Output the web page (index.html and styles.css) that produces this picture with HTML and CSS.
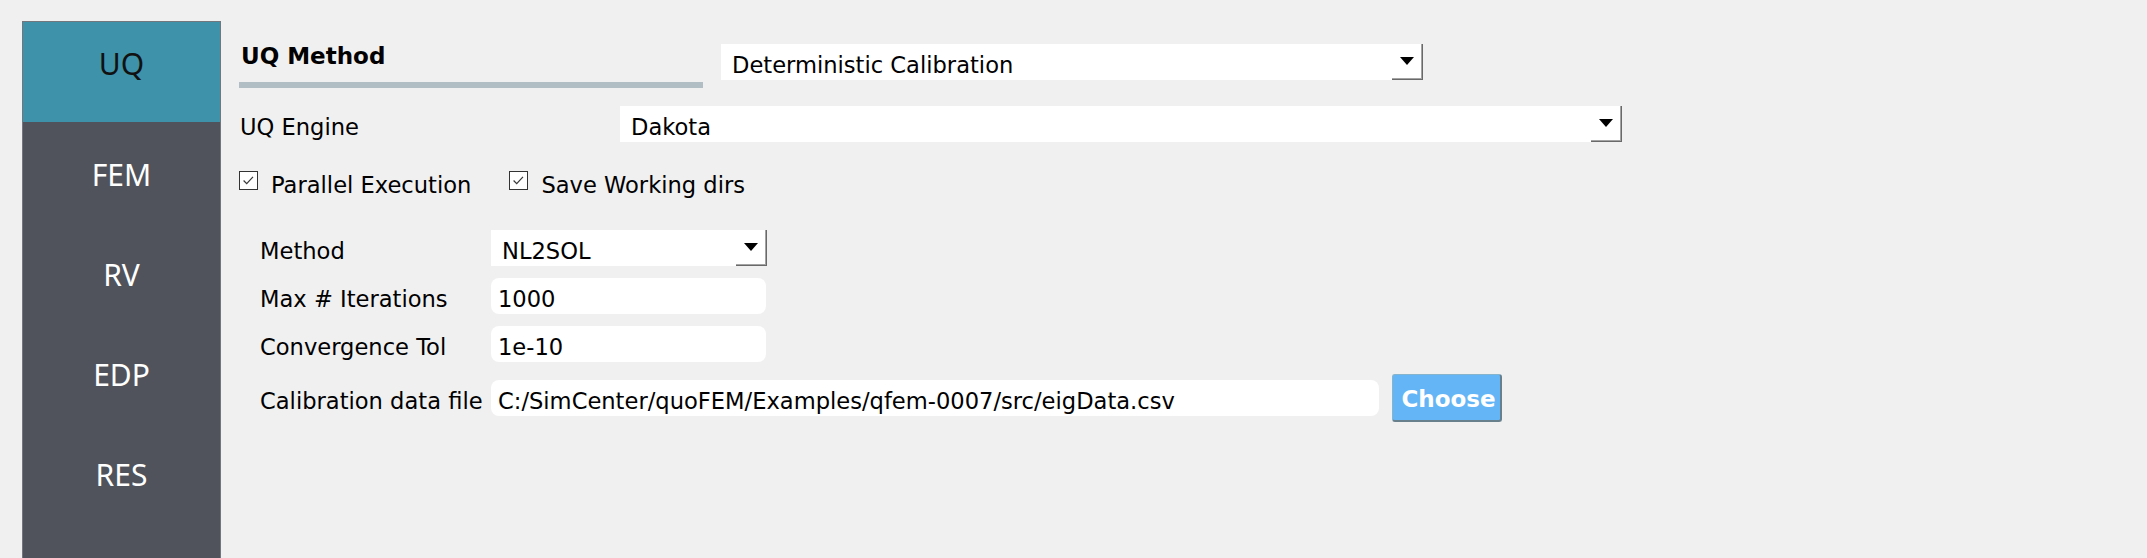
FILE: index.html
```html
<!DOCTYPE html>
<html>
<head>
<meta charset="utf-8">
<link rel="stylesheet" href="styles.css">
</head>
<body>
<nav class="sidebar">
  <div class="nav-item active">UQ</div>
  <div class="nav-item">FEM</div>
  <div class="nav-item">RV</div>
  <div class="nav-item">EDP</div>
  <div class="nav-item">RES</div>
</nav>
<main class="main">
  <div class="row-head">
    <div class="title-block">
      <div class="title">UQ Method</div>
      <div class="title-bar"></div>
    </div>
    <div class="combo combo-method-type">
      <span class="combo-text">Deterministic Calibration</span>
      <span class="combo-btn"><span class="arrow"></span></span>
    </div>
  </div>
  <div class="row-engine">
    <div class="label engine-label">UQ Engine</div>
    <div class="combo combo-engine">
      <span class="combo-text">Dakota</span>
      <span class="combo-btn"><span class="arrow"></span></span>
    </div>
  </div>
  <div class="row-checks">
    <div class="check">
      <span class="box"><svg viewBox="0 0 19 19" width="17" height="17"><path d="M4 9.5 L7.5 13 L14.5 5.5" fill="none" stroke="#3a3a3a" stroke-width="1.4"/></svg></span>
      <span class="check-label">Parallel Execution</span>
    </div>
    <div class="check">
      <span class="box"><svg viewBox="0 0 19 19" width="17" height="17"><path d="M4 9.5 L7.5 13 L14.5 5.5" fill="none" stroke="#3a3a3a" stroke-width="1.4"/></svg></span>
      <span class="check-label">Save Working dirs</span>
    </div>
  </div>
  <div class="form">
    <div class="form-row">
      <div class="label form-label">Method</div>
      <div class="combo combo-small">
        <span class="combo-text">NL2SOL</span>
        <span class="combo-btn"><span class="arrow"></span></span>
      </div>
    </div>
    <div class="form-row">
      <div class="label form-label">Max # Iterations</div>
      <div class="input input-small">1000</div>
    </div>
    <div class="form-row">
      <div class="label form-label">Convergence Tol</div>
      <div class="input input-small">1e-10</div>
    </div>
    <div class="form-row file-row">
      <div class="label form-label">Calibration data file</div>
      <div class="input input-file">C:/SimCenter/quoFEM/Examples/qfem-0007/src/eigData.csv</div>
      <button class="choose">Choose</button>
    </div>
  </div>
</main>
</body>
</html>
```
FILE: styles.css
```css
html, body {
  margin: 0;
  padding: 0;
}
body {
  background: #f0f0f0;
  height: 100vh;
  overflow: hidden;
  display: flex;
  font-family: "DejaVu Sans", sans-serif;
  font-size: 22.6px;
  color: #000;
}
.sidebar {
  margin: 21px 0 0 22px;
  width: 197px;
  border: 1px solid #72767d;
  border-bottom: none;
  background: #50535b;
  display: flex;
  flex-direction: column;
  flex-shrink: 0;
}
.nav-item {
  height: 100px;
  box-sizing: border-box;
  display: flex;
  align-items: center;
  justify-content: center;
  font-family: "Noto Sans", sans-serif;
  font-size: 30px;
  line-height: 1;
  color: #ffffff;
  padding-top: 6px;
}
.nav-item.active {
  background: #3e92a9;
  color: #111;
  padding-top: 0;
  padding-bottom: 16px;
}
.main {
  padding: 43px 0 0 18px;
  display: flex;
  flex-direction: column;
}
.row-head {
  display: flex;
  align-items: flex-start;
}
.title-block {
  width: 464px;
  display: flex;
  flex-direction: column;
}
.title {
  font-weight: bold;
  font-size: 23px;
  line-height: 26px;
  padding-left: 2px;
}
.title-bar {
  margin-top: 13px;
  height: 6px;
  background: #b1bec4;
}
.combo {
  height: 36px;
  box-sizing: border-box;
  background: #fff;
  display: flex;
  align-items: stretch;
}
.combo-text {
  flex: 1;
  display: flex;
  align-items: center;
  padding: 6px 0 0 11px;
  white-space: nowrap;
}
.combo-btn {
  width: 31px;
  box-sizing: border-box;
  border-right: 1px solid #696969;
  border-bottom: 1px solid #696969;
  box-shadow: inset -1px -1px 0 #a3a3a3;
  display: flex;
  align-items: center;
  justify-content: center;
  padding-bottom: 2px;
}
.arrow {
  width: 0;
  height: 0;
  border-left: 7px solid transparent;
  border-right: 7px solid transparent;
  border-top: 8px solid #000;
}
.combo-method-type {
  margin: 1px 0 0 18px;
  width: 702px;
}
.row-engine {
  margin-top: 18px;
  display: flex;
  align-items: center;
}
.label {
  height: 36px;
  box-sizing: border-box;
  display: flex;
  align-items: center;
  padding-top: 6px;
  white-space: nowrap;
}
.engine-label {
  width: 381px;
  padding-left: 1px;
}
.combo-engine {
  width: 1002px;
}
.row-checks {
  margin-top: 22px;
  height: 36px;
  display: flex;
  align-items: center;
}
.check {
  display: flex;
  align-items: center;
  margin-right: 38px;
}
.box {
  width: 19px;
  height: 19px;
  box-sizing: border-box;
  border: 1px solid #333;
  background: #fff;
  display: flex;
  align-items: center;
  justify-content: center;
  margin-bottom: 3px;
}
.check-label {
  margin-left: 13px;
  padding-top: 6px;
  white-space: nowrap;
}
.form {
  margin-top: 30px;
  padding-left: 21px;
  display: flex;
  flex-direction: column;
  gap: 12px;
}
.form-row {
  display: flex;
  align-items: center;
}
.file-row {
  height: 48px;
}
.form-label {
  width: 231px;
}
.input {
  height: 36px;
  box-sizing: border-box;
  background: #fff;
  border-radius: 8px;
  display: flex;
  align-items: center;
  padding: 6px 0 0 7px;
  white-space: nowrap;
}
.combo-small {
  width: 276px;
}
.input-small {
  width: 275px;
}
.input-file {
  width: 888px;
}
.choose {
  margin-left: 13px;
  width: 110px;
  height: 48px;
  box-sizing: border-box;
  background: #64b5f6;
  border: 1px solid #86b4cc;
  border-right: 2px solid #687f8c;
  border-bottom: 2px solid #687f8c;
  border-radius: 3px;
  color: #fff;
  font-family: "DejaVu Sans", sans-serif;
  font-weight: bold;
  font-size: 23px;
  padding: 4px 0 0 4px;
  line-height: 1;
}
```
